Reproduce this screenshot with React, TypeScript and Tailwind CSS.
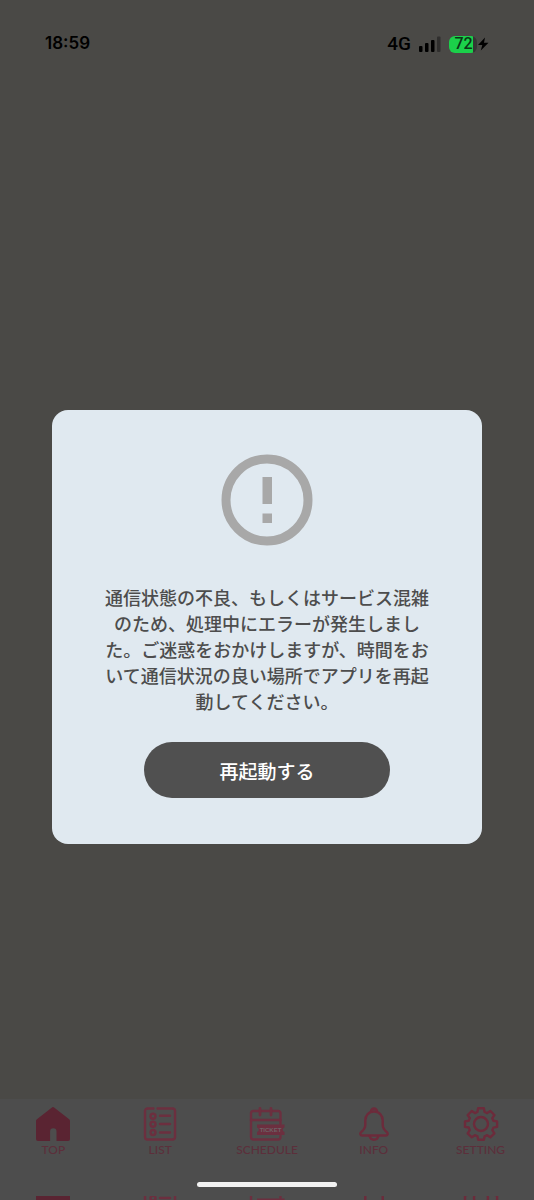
import React from 'react';

type IconProps = { className?: string; plain?: boolean };

const HomeIcon: React.FC<IconProps> = ({ className }) => (
  <svg viewBox="0 0 36 34" className={className} fill="currentColor">
    <path d="M16.600.800a2 2 0 0 1 2.800 0l14.800 11.400A2.500 2.500 0 0 1 35 14v18a2 2 0 0 1-2 2H21.500V24.500a3.200 3.200 0 0 0-6.400 0V34H3a2 2 0 0 1-2-2V14a2.500 2.500 0 0 1 .900-1.800z" />
  </svg>
);

const ListIcon: React.FC<IconProps> = ({ className }) => (
  <svg viewBox="0 0 36 34" className={className} fill="none" stroke="currentColor" strokeWidth="2.4" strokeLinecap="round">
    <path d="M11.500 1.500H5.500A2.500 2.500 0 0 0 3 4v26a2.500 2.500 0 0 0 2.500 2.500h25A2.500 2.500 0 0 0 33 30V4a2.500 2.500 0 0 0-2.500-2.500H15.500" />
    <circle cx="11" cy="9.300" r="2.500" />
    <circle cx="11" cy="17.300" r="2.500" />
    <circle cx="11" cy="25.500" r="2.500" />
    <path d="M18 8.800h10M18 17h10M18 25.500h10" />
  </svg>
);

const ScheduleIcon: React.FC<IconProps> = ({ className, plain }) => (
  <svg viewBox="0 0 36 34" className={className} fill="none" stroke="currentColor" strokeWidth="2.4" strokeLinecap="round">
    <path d="M31.500 17V6.500A2.500 2.500 0 0 0 29 4H4.500A2.500 2.500 0 0 0 2 6.500V30a2.500 2.500 0 0 0 2.500 2.500H29a2.500 2.500 0 0 0 2.500-2.500v-1" />
    <path d="M2 13h29.500" />
    <path d="M11 1.500v6.500M22 1.500v6.500" strokeWidth="2.8" />
    <path d="M8 17.500h27.500v3a2.300 2.300 0 0 0 0 4.500v3H8v-3a2.300 2.300 0 0 0 0-4.500z" fill="currentColor" stroke="none" />
    {!plain && (
      <text
        x="21.500"
        y="25"
        textAnchor="middle"
        className="fill-[#6d6366] stroke-none font-['Liberation_Sans',sans-serif] text-[6px] font-bold"
      >
        TICKET
      </text>
    )}
  </svg>
);

const InfoIcon: React.FC<IconProps> = ({ className }) => (
  <svg viewBox="0 0 36 34" className={className} fill="none" stroke="currentColor" strokeWidth="2.4" strokeLinejoin="round">
    <path d="M18 4.500c-5.200 0-8.700 4-8.700 9v4.200c0 3-1.400 5.200-4 7.300-1.900 1.600-1 3.500 1 3.500h23.400c2 0 2.900-1.900 1-3.500-2.600-2.100-4-4.300-4-7.300v-4.200c0-5-3.500-9-8.700-9z" />
    <path d="M15 4.500a3 3 0 1 1 6 0M13.500 28.500c.500 2.600 2.200 4.200 4.500 4.200s4-1.600 4.500-4.200" />
  </svg>
);

const SettingIcon: React.FC<IconProps> = ({ className }) => (
  <svg viewBox="0 0 36 34" className={className} fill="none" stroke="currentColor" strokeWidth="2.4" strokeLinejoin="round">
    <path d="M15.100 1.300h5.800l.700 3.700 2.600 1.100 3.200-2.100 4 4-2.100 3.200 1.100 2.600 3.700.600v5.500l-3.700.700-1.100 2.600 2.100 3.100-4.100 4-3.100-2.100-2.600 1.100-.700 3.500h-5.700l-.700-3.500-2.600-1.100-3.100 2.100-4.100-4 2.100-3.200-1.100-2.600-3.700-.600v-5.500l3.700-.700 1.100-2.600L4.700 8l4-4 3.200 2.100L14.400 5z" />
    <circle cx="18" cy="17" r="7" />
  </svg>
);

const tabs = [
  { label: 'TOP', Icon: HomeIcon, color: 'text-[#5a2432]' },
  { label: 'LIST', Icon: ListIcon, color: 'text-[#6c2f3f]' },
  { label: 'SCHEDULE', Icon: ScheduleIcon, color: 'text-[#6c2f3f]' },
  { label: 'INFO', Icon: InfoIcon, color: 'text-[#6c2b3b]' },
  { label: 'SETTING', Icon: SettingIcon, color: 'text-[#6c2b3b]' },
];

const StatusBar: React.FC = () => (
  <header className="flex h-[88px] items-center justify-between px-[45px] font-['Inter',sans-serif] text-black">
    <time className="text-[17px] font-semibold">18:59</time>
    <div className="flex items-center gap-2">
      <span className="font-['Roboto',sans-serif] text-[19px] font-medium">4G</span>
      <svg viewBox="0 0 22 16" className="h-4 w-[22px]" fill="currentColor">
        <rect x="0" y="10" width="3.500" height="6" rx="1" />
        <rect x="6" y="7" width="3.500" height="9" rx="1" />
        <rect x="12" y="4" width="3.500" height="12" rx="1" />
        <rect x="18" y="0.500" width="3.500" height="15.500" rx="1" className="fill-[#302f2e]" />
      </svg>
      <div className="flex items-center">
        <div className="flex h-[17px] w-7 items-center justify-center rounded-md bg-linear-to-r from-[#1bd04a] from-85% to-[#363534] to-85% pl-px font-['Roboto',sans-serif] text-base font-medium text-[#0b3517]">
          72
        </div>
        <svg viewBox="0 0 12 14" className="h-[14px] w-3" fill="currentColor">
          <path d="M8 .5 1 8h4.300L3.800 13.500 11.500 5.800H7z" />
        </svg>
      </div>
    </div>
  </header>
);

const TabBar: React.FC = () => (
  <nav className="relative h-[101px] overflow-hidden bg-[#4d4d4d] pt-2">
    <div className="grid grid-cols-5">
      {tabs.map(({ label, Icon, color }) => (
        <a key={label} href={`#${label.toLowerCase()}`} className={`flex flex-col items-center ${color}`}>
          <Icon className="h-[34px] w-9" />
          <span className="font-['Lato',sans-serif] text-[12px] leading-[18px] font-medium text-[#5c2f3b]">{label}</span>
        </a>
      ))}
    </div>
    {/* strip of the repeated icons at the bottom edge */}
    <div aria-hidden="true" className="mt-[37px] grid h-1 grid-cols-5 overflow-hidden">
      {tabs.map(({ label, Icon, color }) => (
        <div key={label} className={`flex justify-center ${color}`}>
          <Icon plain className="-mt-[15px] h-[34px] w-9" />
        </div>
      ))}
    </div>
    <div className="absolute bottom-[13px] left-1/2 h-[5px] w-[140px] -translate-x-1/2 rounded-full bg-[#f2f2f2]" />
  </nav>
);

const ErrorDialog: React.FC = () => (
  <section
    role="alertdialog"
    aria-describedby="error-message"
    className="flex w-full max-w-[430px] flex-col items-center rounded-2xl bg-[#e0e9f0] px-[50px] pt-[44px] pb-[46px]"
  >
    <svg viewBox="0 0 92 92" className="size-[92px] text-[#a8a8a8]" fill="currentColor">
      <circle cx="46" cy="46" r="41" fill="none" stroke="currentColor" strokeWidth="9" />
      <path d="M41.500 23h9.500v27h-9.500zM41.500 59.500h9.500v9.500h-9.500z" />
    </svg>
    <p id="error-message" className="mt-[38px] text-center text-[18px] leading-[26px] font-medium text-[#4d4d4d]">
      通信状態の不良、もしくはサービス混雑のため、処理中にエラーが発生しました。ご迷惑をおかけしますが、時間をおいて通信状況の良い場所でアプリを再起動してください。
    </p>
    <button type="button" className="mt-7 h-14 w-full max-w-[246px] rounded-full bg-[#505050] pt-1 text-[19px] font-medium text-white">
      再起動する
    </button>
  </section>
);

const App: React.FC = () => {
  return (
    <div lang="ja" className="flex min-h-screen flex-col bg-[#4a4946] font-['Noto_Sans_CJK_JP',sans-serif]">
      <StatusBar />
      <main className="flex flex-1 items-center justify-center px-[52px] pt-[66px]">
        <ErrorDialog />
      </main>
      <TabBar />
    </div>
  );
};

export default App;
